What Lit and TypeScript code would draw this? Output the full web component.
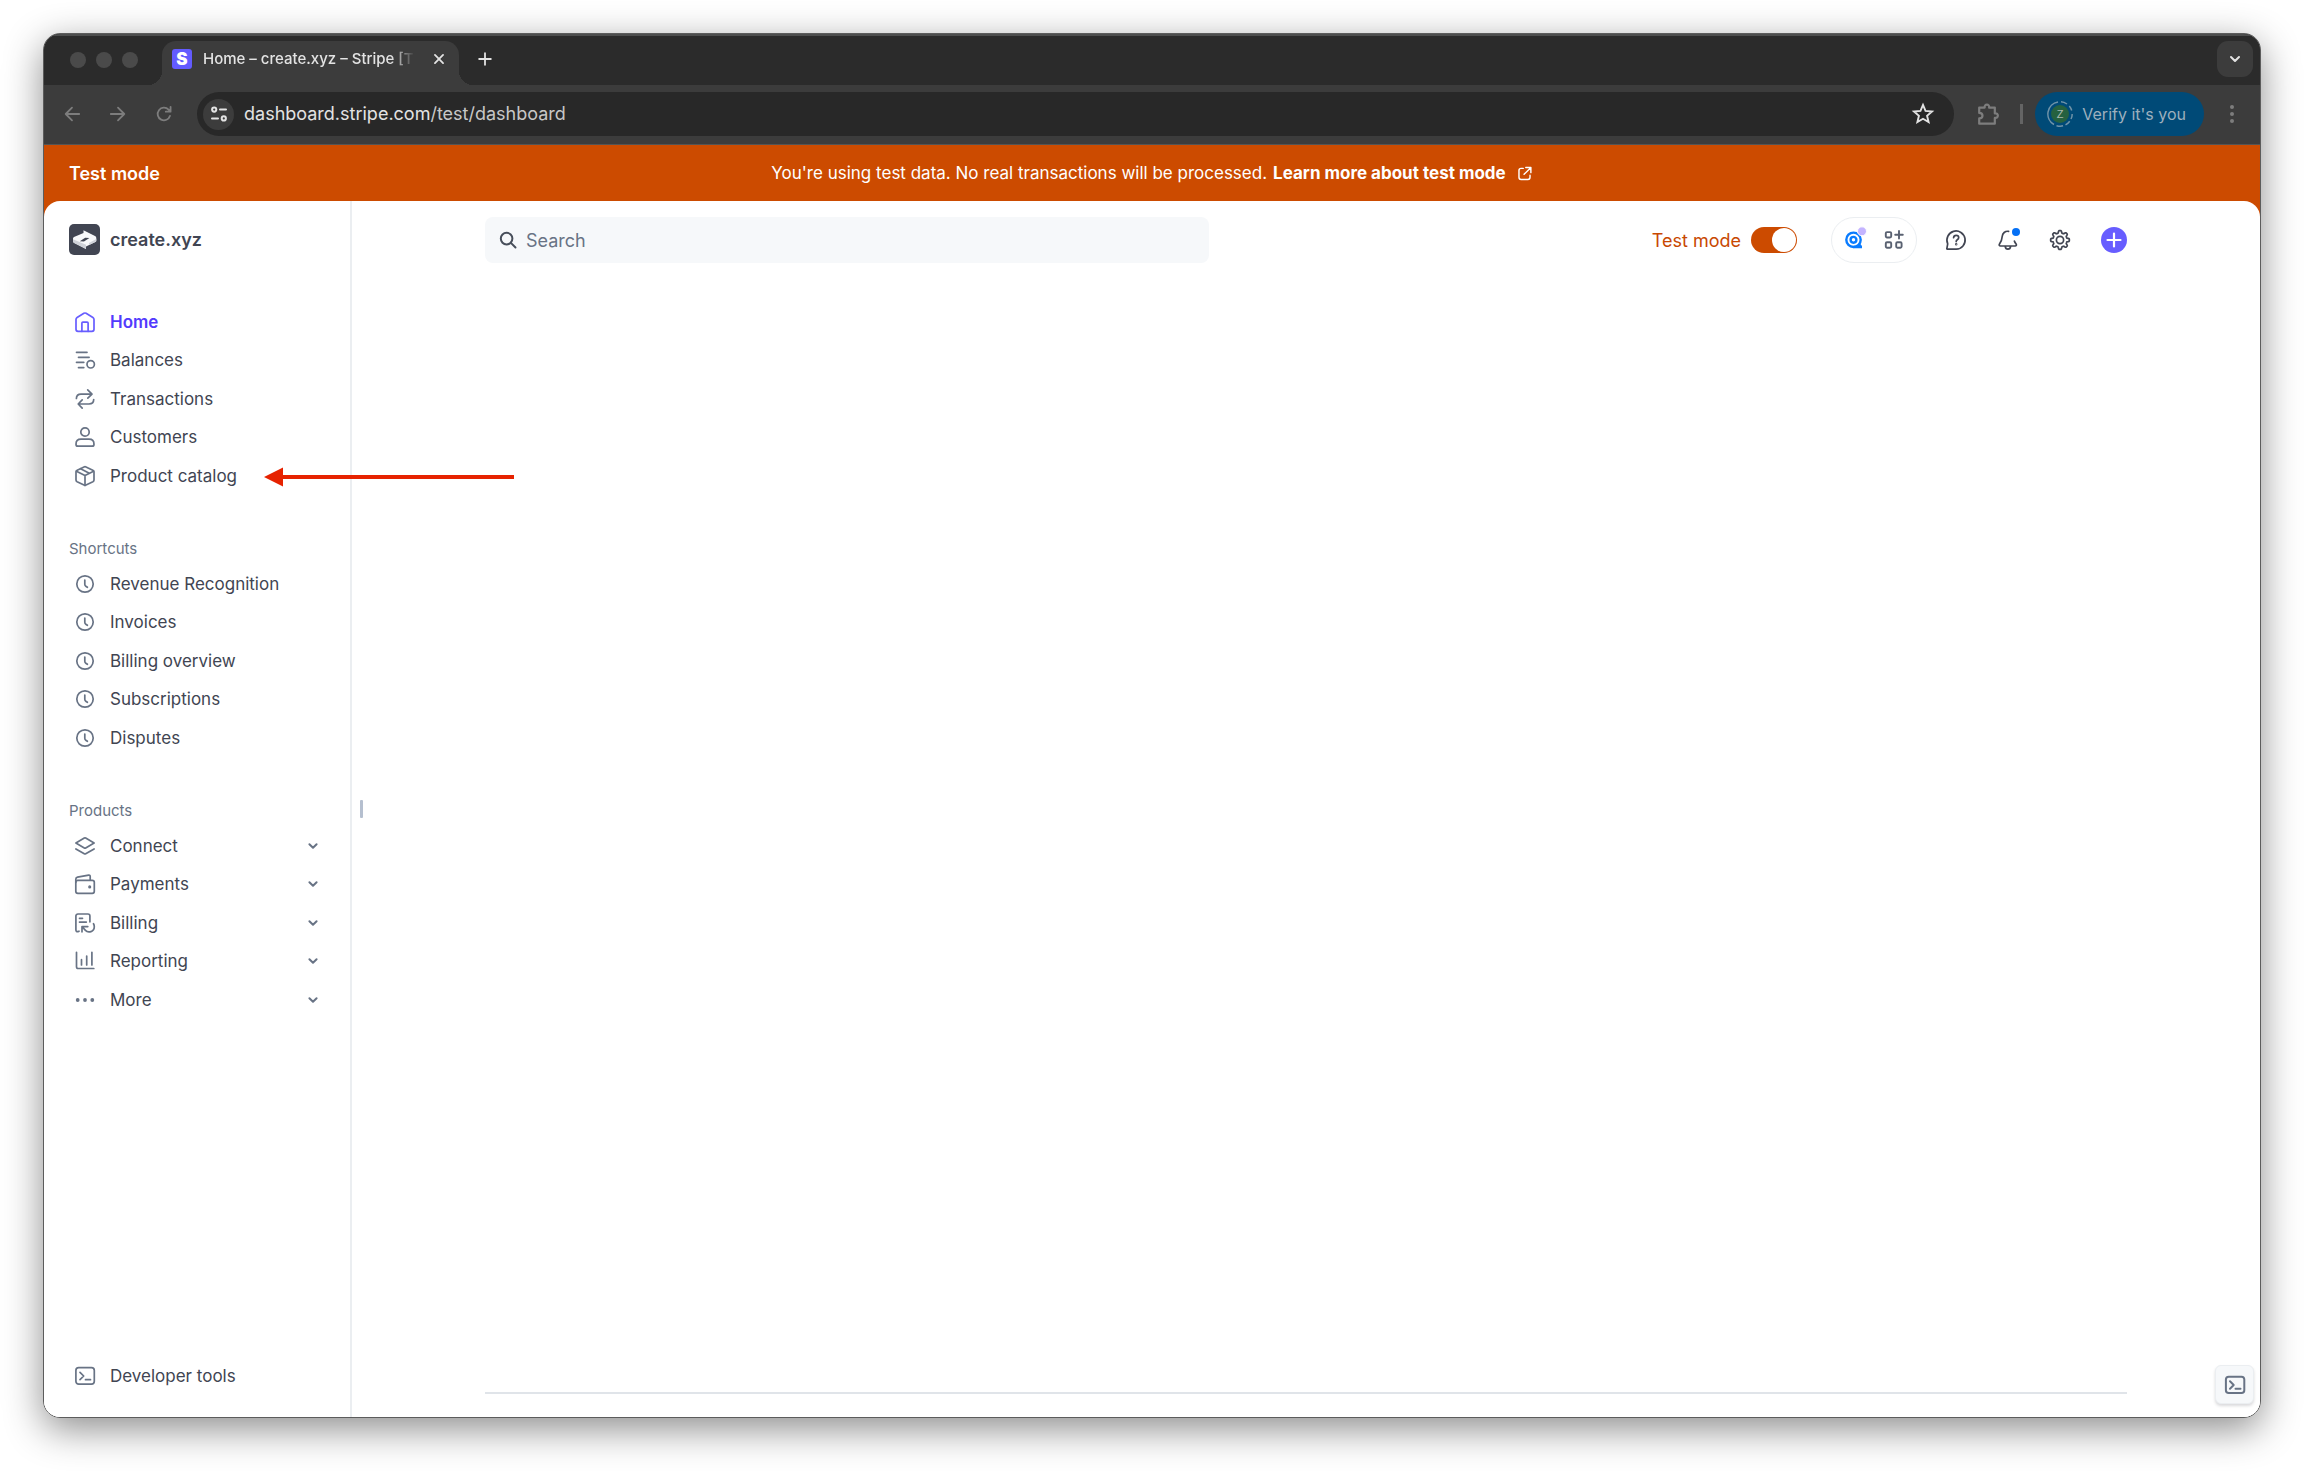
import { LitElement, html, css, svg, type SVGTemplateResult } from "lit";
import { customElement, state } from "lit/decorators.js";

// Outline of an eight-toothed wheel centred in a 20 by 20 box.
const gearOutline = () => {
  const points = Array.from({ length: 128 }, (_, i) => {
    const angle = (i / 128) * Math.PI * 2;
    const wave = Math.max(-1, Math.min(1, 1.9 * Math.cos(8 * angle)));
    const r = 8.2 + 1.15 * wave;
    return `${(10 + r * Math.sin(angle)).toFixed(2)} ${(10 - r * Math.cos(angle)).toFixed(2)}`;
  });
  return `M${points.join("L")}z`;
};

const icons: Record<string, SVGTemplateResult> = {
  home: svg`<path d="M1 7.6q0-1.4 1.1-2.1l6.8-4.2q1.1-.6 2.2 0l6.8 4.2Q19 6.200 19 7.600V17.300a2 2 0 0 1-2 2H3a2 2 0 0 1-2-2z"/><path d="M6.900 19.300v-8.200q0-1 1-1h4.200q1 0 1 1v8.200"/>`,
  balances: svg`<path d="M1.500 2.300h10.500M3.500 7.300h10.600M1.500 12.300h7.300M3.500 17.600h5.300"/><circle cx="15.700" cy="14.300" r="3.700"/>`,
  transactions: svg`<path d="M12.700.9 17 5.100l-4.200 4.100M16.800 5.100H6q-4.600 0-4.600 4.400M7.200 10.800l-4 4.200 4 4.200M3.400 15H14q4.700 0 4.700-4.400"/>`,
  customers: svg`<circle cx="10" cy="5" r="4.200"/><path d="M1 17.200c0-3 2-5 5-5h8c3 0 5 2 5 5 0 1.400-.6 2-1.800 2H2.800c-1.200 0-1.800-.6-1.800-2z"/>`,
  product: svg`<path d="M9 .9q1-.5 2 0l6.800 3.300Q19 4.900 19 6v8q0 1.200-1.100 1.800L11 19.100q-1 .5-2 0l-6.900-3.300Q1 15.200 1 14V6q0-1.100 1.200-1.800z"/><path d="M1.400 5.200 10 9.600l8.600-4.400M10 9.600v9.800M5.600 2.700l8.700 4.500"/>`,
  clock: svg`<circle cx="10" cy="10" r="8.200"/><path d="M9.800 6v4.300q0 1.300 1 1.900l1.600 1.100"/>`,
  connect: svg`<path d="m.9 7 8.400-4.900q.7-.4 1.400 0L19.100 7l-8.400 4.900q-.7.4-1.400 0zM.9 12.900l8.400 4.900q.7.400 1.400 0l8.400-4.900"/>`,
  payments: svg`<rect x=".8" y="6.300" width="18.500" height="13" rx="2"/><path d="M.8 8.300V5.200q0-1.700 1.700-2l11.200-2.100q1.500-.2 1.500 1.300v3.700"/><circle cx="14.700" cy="12.900" r=".7"/>`,
  billing: svg`<path d="m4 18.200-1 .4q-2.100.3-2.100-1.800V3a2 2 0 0 1 2-2h10a2 2 0 0 1 2 2v5.800M4.500 5.300h3M4.500 9.100h6.800M7 18.800v-5.200h5.800M7.200 13.800l3 3.300c3.200 3.600 9.100 1.500 9.100-3.400q0-1.800-.8-3"/>`,
  reporting: svg`<path d="M1.500 1.300v14.500q0 1.700 1.700 1.700h15.600M6.500 8.700v5.200M11.700 5v8.900M16.900 1.300v12.600"/>`,
  more: svg`<g fill="currentColor" stroke="none"><circle cx="2.700" cy="10" r="1.900"/><circle cx="10" cy="10" r="1.900"/><circle cx="17.300" cy="10" r="1.900"/></g>`,
  terminal: svg`<rect x=".9" y="1.700" width="18.400" height="16.400" rx="2.800"/><path d="M5 6.300 8.700 10 5 13.700M10.500 13.700h5"/>`,
  chevron: svg`<path d="m6 8 4 4 4-4"/>`,
  search: svg`<circle cx="8.600" cy="8.600" r="5.800"/><path d="m12.900 12.900 4.600 4.600"/>`,
  apps: svg`<rect x="1.800" y="2.100" width="5.400" height="5.400" rx="1.200"/><rect x="1.800" y="12.300" width="5.400" height="5.400" rx="1.200"/><rect x="12.200" y="12.300" width="5.400" height="5.400" rx="1.200"/><path d="M15 1v7.600M11.200 4.800h7.600"/>`,
  help: svg`<path d="M1.700 13.800A9.100 9.100 0 1 1 10.200 19.200H1.600q-.9 0-.7-.9z"/><path d="M7.600 7.700q.2-2.400 2.500-2.400 2.600 0 2.600 2.300 0 1.400-1.400 2.200-1.100.6-1.100 1.800"/><circle cx="10.200" cy="14.300" r=".4"/>`,
  bell: svg`<path d="M10.600 1.300C7 .8 4.500 3.300 4.200 6.500c-.3 4.200-1.300 5.700-2.700 7.600-.7 1-.2 1.900 1 1.900h14.600c1.200 0 1.700-.9 1-1.900-.7-1-1.300-1.900-1.700-3M7.200 16.300c.4 3.700 5 3.700 5.400 0"/>`,
  gear: svg`<path d=${gearOutline()} /><circle cx="10" cy="10" r="3.600"/>`,
  plus: svg`<path d="M10 3.500v13M3.500 10h13"/>`,
  external: svg`<path d="M8.500 4H6a2.500 2.500 0 0 0-2.500 2.500v8A2.500 2.500 0 0 0 6 17h8a2.500 2.500 0 0 0 2.500-2.500V12M11.500 3h6v6M17 3.500l-7.500 7.500"/>`,
  close: svg`<path d="m5.500 5.500 9 9m0-9-9 9"/>`,
  back: svg`<path d="M18 10H3M10 3l-7 7 7 7"/>`,
  forward: svg`<path d="M2 10h15M10 3l7 7-7 7"/>`,
  reload: svg`<path d="M16.700 12a7 7 0 1 1-1.600-6.800L17 7.200M17.300 2v5.400H12"/>`,
  tune: svg`<circle cx="5.200" cy="5.600" r="2.100"/><path d="M11 5.600h6M3 14.400h6"/><circle cx="14.800" cy="14.400" r="2.100"/>`,
  star: svg`<path stroke-linejoin="miter" d="m10 1.800 2.300 5.400 5.900.5-4.500 3.900 1.400 5.700-5.100-3-5.100 3 1.400-5.700-4.500-3.900 5.900-.5z"/>`,
  puzzle: svg`<path d="M2 4.200h5c-.8-3.600 4.800-3.600 4 0h5.200v5.300c3.700-.8 3.700 4.700 0 4v5.300H2v-4.800c4-.3 4-4.700 0-5z"/>`,
  dots: svg`<g fill="currentColor" stroke="none"><circle cx="10" cy="3" r="2"/><circle cx="10" cy="10" r="2"/><circle cx="10" cy="17" r="2"/></g>`,
};

const icon = (name: string, cls = "") =>
  html`<svg class="icon ${cls}" viewBox="0 0 20 20" aria-hidden="true">${icons[name]}</svg>`;

const mainNav = [
  ["Home", "home"],
  ["Balances", "balances"],
  ["Transactions", "transactions"],
  ["Customers", "customers"],
  ["Product catalog", "product"],
];
const shortcuts = ["Revenue Recognition", "Invoices", "Billing overview", "Subscriptions", "Disputes"];
const products = [
  ["Connect", "connect"],
  ["Payments", "payments"],
  ["Billing", "billing"],
  ["Reporting", "reporting"],
  ["More", "more"],
];

@customElement("browser-chrome")
export class BrowserChrome extends LitElement {
  static styles = css`
    :host { display: block; color: #e3e3e3; background: #3c3c3c; }
    * { box-sizing: border-box; }
    button { padding: 0; border: 0; background: none; color: inherit; font: inherit; display: grid; place-items: center; }
    .icon { width: 20px; height: 20px; display: block; fill: none; stroke: currentColor; stroke-width: 2; stroke-linecap: round; stroke-linejoin: round; overflow: visible; }
    .strip { display: flex; align-items: flex-end; height: 51px; background: #2b2b2b; border-top: 2px solid #4d4e4e; }
    .lights { display: flex; gap: 10px; align-self: center; margin: 0 24px 0 26px; padding-bottom: 1px; }
    .light { width: 16px; height: 16px; border-radius: 50%; background: #4a4a4a; }
    .tab { position: relative; display: flex; align-items: center; width: 297px; height: 44px; padding: 0 10px 8px 10px; border-radius: 14px 14px 0 0; background: #3c3c3c; }
    .tab::before, .tab::after { content: ""; position: absolute; bottom: 0; width: 14px; height: 14px; }
    .tab::before { right: 100%; background: radial-gradient(circle at 0 0, transparent 14px, #3c3c3c 14px); }
    .tab::after { left: 100%; background: radial-gradient(circle at 100% 0, transparent 14px, #3c3c3c 14px); }
    .favicon { width: 20px; height: 20px; flex: none; border-radius: 3px; background: #635bff; display: grid; place-items: center; color: #fff; font-size: 17px; font-weight: 900; line-height: 20px; }
    .title { flex: 1; margin-left: 11px; font-size: 15px; line-height: 24px; white-space: nowrap; font-weight: 500; mask-image: linear-gradient(90deg, #000 88%, transparent 99%); }
    .close { width: 20px; height: 20px; margin-left: 12px; }
    .close .icon { width: 18px; height: 18px; }
    .new { width: 32px; height: 32px; margin: 0 0 10px 10px; }
    .new .icon { width: 18px; height: 18px; }
    .list { width: 36px; height: 36px; margin: 0 7px 8px auto; border-radius: 11px; background: #3c3c3c; }
    .bar { display: flex; align-items: center; height: 60px; padding: 0 18px 1px 15px; border-bottom: 1px solid #545454; color: #7d7d7d; }
    .nav { width: 26px; height: 30px; margin-right: 20px; }
    .nav .icon { width: 18px; height: 18px; }
    .omni { flex: 1; display: flex; align-items: center; height: 44px; border-radius: 22px; background: #282828; padding: 0 20px 0 6px; color: #e3e3e3; }
    .site { width: 31px; height: 31px; border-radius: 50%; background: #3c3c3c; }
    .url { flex: 1; margin-left: 10px; font-size: 18px; line-height: 26px; }
    .path { color: #c7c7c7; }
    .star .icon { width: 22px; height: 22px; stroke-width: 1.700; }
    .puzzle { margin-left: 23px; }
    .puzzle .icon { width: 22px; height: 22px; }
    .rule { width: 3px; height: 20px; margin: 0 12px 0 21px; background: #646464; }
    .verify { display: flex; gap: 9px; align-items: center; height: 44px; padding: 0 18px 0 12px; border-radius: 22px; background: #004a77; color: #9db0be; font-size: 16px; }
    .avatar { width: 26px; height: 26px; }
    .avatar text { font: 11px "Liberation Sans", sans-serif; fill: #a8b8b0; }
    .menu { margin-left: 18px; }
  `;

  render() {
    return html`
      <div class="strip">
        <div class="lights"><span class="light"></span><span class="light"></span><span class="light"></span></div>
        <div class="tab">
          <span class="favicon">S</span>
          <span class="title">Home – create.xyz – Stripe [T</span>
          <button class="close" aria-label="Close tab">${icon("close")}</button>
        </div>
        <button class="new" aria-label="New tab">${icon("plus")}</button>
        <button class="list" aria-label="Tab list">${icon("chevron")}</button>
      </div>
      <div class="bar">
        <button class="nav" aria-label="Back">${icon("back")}</button>
        <button class="nav" aria-label="Forward">${icon("forward")}</button>
        <button class="nav" aria-label="Reload">${icon("reload")}</button>
        <div class="omni">
          <button class="site" aria-label="Site information">${icon("tune")}</button>
          <span class="url">dashboard.stripe.com<span class="path">/test/dashboard</span></span>
          <button class="star" aria-label="Bookmark">${icon("star")}</button>
        </div>
        <button class="puzzle" aria-label="Extensions">${icon("puzzle")}</button>
        <span class="rule"></span>
        <button class="verify">
          <svg class="avatar" viewBox="0 0 26 26" aria-hidden="true">
            <circle cx="13" cy="13" r="9" fill="#256140" />
            <path d="M11 .9a12.200 12.200 0 0 0-4 22.600M9.500 24.700q4 1 6.500.1M18.500 23.900q2.500-1.200 4.200-3.600M24 18q1.300-2.500 1.100-5M24.700 9.500q-.7-2.400-2.400-4.400M20 3Q17 .9 14 .8" fill="none" stroke="#6f93a8" stroke-width="1.500"/>
            <text x="13" y="17" text-anchor="middle">Z</text>
          </svg>
          Verify it's you
        </button>
        <button class="menu" aria-label="Menu">${icon("dots")}</button>
      </div>
    `;
  }
}

@customElement("app-root")
export class AppRoot extends LitElement {
  @state() private testMode = true;

  static styles = css`
    :host { display: flex; box-sizing: border-box; min-height: 100vh; padding: 33px 43px 53px; background: #fff; font-family: Inter, "Noto Sans", sans-serif; color: #414552; font-size: 17px; }
    * { box-sizing: border-box; }
    button { padding: 0; border: 0; background: none; color: inherit; font: inherit; }
    a { color: inherit; text-decoration: none; }
    ul { list-style: none; margin: 0; padding: 0; }
    .icon { flex: none; width: 20px; height: 20px; display: block; fill: none; stroke: currentColor; stroke-width: 1.700; stroke-linecap: round; stroke-linejoin: round; overflow: visible; }
    .window { position: relative; flex: 1; display: flex; flex-direction: column; border: 1px solid #5c5c5c; border-radius: 17px; box-shadow: 0 11px 38px rgba(0, 0, 0, 0.45); }
    browser-chrome { border-radius: 16px 16px 0 0; overflow: hidden; }
    .banner { display: grid; grid-template-columns: 1fr auto 1fr; align-items: center; height: 72px; margin-bottom: -16px; padding: 0 25px 16px; background: #cc4b00; color: #fff; }
    .banner strong { font-size: 18px; font-weight: 600; }
    .notice { display: flex; align-items: center; gap: 6px; }
    .learn { display: flex; align-items: center; gap: 10px; font-weight: 700; }
    .learn .icon { width: 17px; height: 17px; }
    .page { flex: 1; display: flex; border-radius: 16px; background: #fff; }
    .side { width: 308px; flex: none; display: flex; flex-direction: column; padding: 23px 28px 22px 25px; border-right: 2px solid #ebeef1; }
    .brand { display: flex; align-items: center; gap: 10px; margin-bottom: 48px; font-size: 18px; font-weight: 600; }
    .logo { width: 31px; height: 31px; }
    .group { display: grid; grid-auto-rows: 1fr; min-height: 192px; margin-bottom: 42px; }
    .label { margin: 0 0 4px; font-size: 15px; line-height: 24px; font-weight: 400; color: #687385; }
    .row { display: flex; align-items: center; gap: 10px; width: 100%; height: 38px; text-align: left; }
    .row .glyph { width: 31px; display: grid; place-items: center; color: #687385; }
    .row.active { color: #533afd; font-weight: 600; }
    .row.active .glyph { color: #675dff; }
    .row .more { width: 18px; height: 18px; margin-left: auto; stroke-width: 2.200; color: #687385; }
    .dev { margin-top: auto; }
    .main { flex: 1; display: flex; flex-direction: column; justify-content: space-between; padding: 16px 133px 23px; }
    .top { display: flex; align-items: center; gap: 26px; }
    .search { flex: 0 1 724px; display: flex; align-items: center; gap: 8px; height: 46px; margin-right: auto; padding: 0 14px 0 13px; border-radius: 8px; background: #f6f8fa; font-size: 18px; }
    .search .icon { stroke-width: 2; color: #474e5a; }
    .search input { flex: 1; border: 0; padding: 0; outline: 0; background: none; font: inherit; color: #414552; }
    .search input::placeholder { color: #687385; opacity: 1; }
    .mode { display: flex; align-items: center; gap: 10px; margin-right: 8px; font-size: 18px; color: #c84801; }
    .mode input { appearance: none; width: 46px; height: 26px; margin: 0; padding: 1px; border-radius: 13px; background: #cc4b00; display: flex; justify-content: flex-end; }
    .mode input::before { content: ""; width: 24px; height: 24px; border-radius: 50%; background: #fff; }
    .mode input:not(:checked) { justify-content: flex-start; background: #a3acba; }
    .pill { display: flex; align-items: center; justify-content: space-between; width: 86px; height: 46px; padding: 0 12px; border: 1px solid #ebeef1; border-radius: 23px; color: #596171; }
    .pill svg { width: 20px; height: 20px; display: block; overflow: visible; }
    .pill .icon { stroke-width: 1.900; }
    .tool { width: 26px; height: 26px; display: grid; place-items: center; position: relative; }
    .dot { position: absolute; top: 1px; right: 1px; width: 8px; height: 8px; border-radius: 50%; background: #0570f5; }
    .add { margin-left: 2px; border-radius: 50%; background: #675dff; color: #fff; }
    .add .icon { stroke-width: 2.200; }
    .end { width: 100%; height: 2px; margin: 0; border: 0; background: #e0e4e9; }
    .grip { position: absolute; left: 316px; top: 766px; width: 3px; height: 18px; border-radius: 1px; background: #b5bfcf; }
    .pointer { position: absolute; left: 220px; top: 433px; width: 250px; height: 20px; fill: #e62200; }
    .console { position: absolute; right: 6px; bottom: 13px; width: 39px; height: 39px; display: grid; place-items: center; border-radius: 6px; background: #f6f8fa; color: #687385; border: 1px solid #ebeef1; box-shadow: 0 2px 3px rgba(48, 49, 61, 0.18); }
    .console .icon { stroke-width: 2; }
  `;

  private row(label: string, glyph: string, active = false) {
    return html`<li><a class="row ${active ? "active" : ""}" href="#"><span class="glyph">${icon(glyph)}</span>${label}</a></li>`;
  }

  render() {
    return html`
      <div class="window">
        <browser-chrome></browser-chrome>
        <div class="banner">
          <strong>Test mode</strong>
          <span class="notice">You're using test data. No real transactions will be processed.
            <a class="learn" href="#">Learn more about test mode ${icon("external")}</a></span>
        </div>
        <div class="page">
          <nav class="side">
            <div class="brand">
              <svg class="logo" viewBox="0 0 31 31" aria-hidden="true">
                <rect width="31" height="31" rx="5" fill="#414552" />
                <path d="M14.500 6.200 26 12q1.300.7 1.300 2v2.500q0 1-1 1.500L17 22.500V25L5.200 19Q4 18.300 4 17v-2.500q0-1 1-1.500l9.500-4z" fill="#f7f8fa" />
                <path d="m4 15.200 13 5.600V25L5.200 19Q4 18.300 4 17zM27.300 15l-7.300 4v2l6.300-3q1-.5 1-1.500z" fill="#cfd2d9" />
                <path d="m10.800 17.300 5.400-3.600 4.200.2-5.400 3.600z" fill="#414552" />
              </svg>
              create.xyz
            </div>
            <ul class="group">${mainNav.map(([l, g], i) => this.row(l, g, i === 0))}</ul>
            <h2 class="label">Shortcuts</h2>
            <ul class="group">${shortcuts.map((l) => this.row(l, "clock"))}</ul>
            <h2 class="label">Products</h2>
            <ul class="group">
              ${products.map(
                ([l, g]) => html`<li><button class="row" aria-expanded="false"><span class="glyph">${icon(g)}</span>${l}${icon("chevron", "more")}</button></li>`
              )}
            </ul>
            <a class="row dev" href="#"><span class="glyph">${icon("terminal")}</span>Developer tools</a>
          </nav>
          <main class="main">
            <header class="top">
              <label class="search">${icon("search")}<input type="search" placeholder="Search" aria-label="Search" /></label>
              <label class="mode">Test mode
                <input type="checkbox" role="switch" .checked=${this.testMode} @change=${(e: Event) => (this.testMode = (e.target as HTMLInputElement).checked)} />
              </label>
              <div class="pill">
                <button aria-label="Assistant">
                  <svg viewBox="0 0 20 20" aria-hidden="true">
                    <g fill="none" stroke="#0a7cff" stroke-width="2.400">
                      <circle cx="9.500" cy="9.800" r="7.200" />
                      <path d="M9.500 17H18M15.200 14.500l1.800 2.300" />
                      <circle cx="9.500" cy="9.800" r="2.900" />
                    </g>
                    <circle cx="18" cy="1.300" r="4.500" fill="#c4b4ff" stroke="#fff" />
                  </svg>
                </button>
                <button aria-label="Apps">${icon("apps")}</button>
              </div>
              <button class="tool" aria-label="Help">${icon("help")}</button>
              <button class="tool" aria-label="Notifications">${icon("bell")}<span class="dot"></span></button>
              <button class="tool" aria-label="Settings">${icon("gear")}</button>
              <button class="tool add" aria-label="Create">${icon("plus")}</button>
            </header>
            <hr class="end" />
          </main>
        </div>
        <span class="grip"></span>
        <svg class="pointer" viewBox="0 0 250 20" aria-hidden="true"><path d="M0 10 19 .5v7.500h231v4H19v7.500z" /></svg>
        <button class="console" aria-label="Open console">${icon("terminal")}</button>
      </div>
    `;
  }
}
